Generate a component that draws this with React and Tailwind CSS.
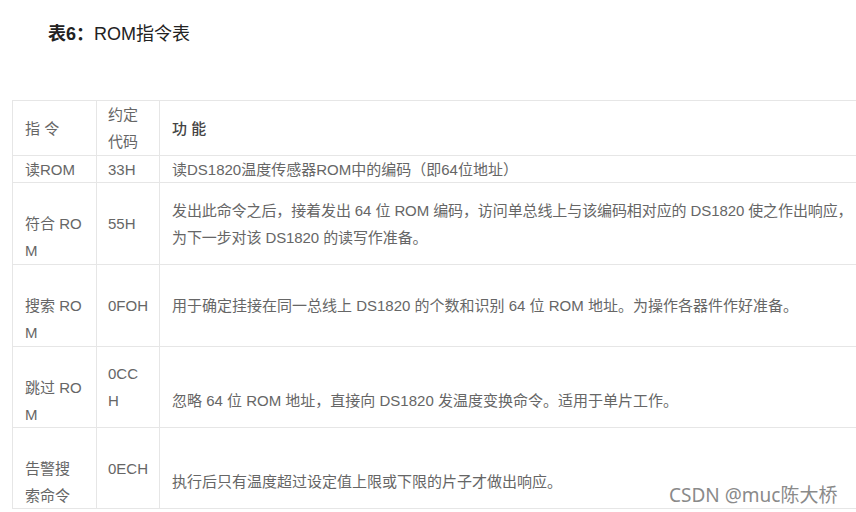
import React from 'react';

const font = { fontFamily: '"Liberation Sans", "Noto Sans CJK SC", sans-serif' };

// each row: height, and three cells; shifted cells sit half a line lower
const rows = [
  {
    h: 'h-[27px]',
    cells: [
      { lines: ['读ROM'] },
      { lines: ['33H'] },
      { lines: ['读DS1820温度传感器ROM中的编码（即64位地址）'] },
    ],
  },
  {
    h: 'h-[82px]',
    cells: [
      { lines: ['符合 RO', 'M'], shift: true },
      { lines: ['55H'] },
      {
        lines: [
          '发出此命令之后，接着发出 64 位 ROM 编码，访问单总线上与该编码相对应的 DS1820 使之作出响应，',
          '为下一步对该 DS1820 的读写作准备。',
        ],
        tight: true,
      },
    ],
  },
  {
    h: 'h-[82px]',
    cells: [
      { lines: ['搜索 RO', 'M'], shift: true },
      { lines: ['0FOH'] },
      { lines: ['用于确定挂接在同一总线上 DS1820 的个数和识别 64 位 ROM 地址。为操作各器件作好准备。'] },
    ],
  },
  {
    h: 'h-[81px]',
    cells: [
      { lines: ['跳过 RO', 'M'], shift: true },
      { lines: ['0CC', 'H'] },
      { lines: ['忽略 64 位 ROM 地址，直接向 DS1820 发温度变换命令。适用于单片工作。'], shift: true },
    ],
  },
  {
    h: 'h-[81px]',
    cells: [
      { lines: ['告警搜', '索命令'], shift: true },
      { lines: ['0ECH'] },
      { lines: ['执行后只有温度超过设定值上限或下限的片子才做出响应。'], shift: true },
    ],
  },
];

const colClass = [
  'w-[84px] shrink-0 border-r border-[#e6e6e6] pl-[12px]',
  'w-[63px] shrink-0 border-r border-[#e6e6e6] pl-[11px]',
  'flex-1 min-w-0 pl-[12px]',
];

function Cell({ cell, col }) {
  return (
    <div
      className={`${colClass[col]} flex flex-col justify-center whitespace-nowrap ${cell.shift ? 'pt-[27px]' : ''} ${cell.tight ? 'tracking-[-0.1px]' : ''}`}
    >
      {cell.lines.map((line, i) => (
        <div key={i} className="leading-[27px]">
          {line}
        </div>
      ))}
    </div>
  );
}

export default function App() {
  return (
    <div className="relative w-[856px] h-[512px] overflow-hidden bg-white" style={font}>
      {/* Title */}
      <div className="pl-[48px] pt-[22px] text-[18px] leading-[24px] text-[#222]">
        <span className="font-bold">表6：</span>ROM指令表
      </div>

      {/* Table */}
      <div className="ml-[12px] mt-[54px] w-[844px] border-t border-l border-[#e6e6e6] text-[15px] text-[#666]">
        <div className="flex h-[55px] border-b border-[#e6e6e6]">
          <Cell cell={{ lines: ['指 令'] }} col={0} />
          <Cell cell={{ lines: ['约定', '代码'] }} col={1} />
          <div className={`${colClass[2]} flex flex-col justify-center`}>
            <div className="leading-[27px] font-medium text-[#444]">功 能</div>
          </div>
        </div>
        {rows.map((row, r) => (
          <div key={r} className={`flex ${row.h} border-b border-[#e6e6e6]`}>
            {row.cells.map((cell, c) => (
              <Cell key={c} cell={cell} col={c} />
            ))}
          </div>
        ))}
      </div>

      {/* Watermark */}
      <div
        className="absolute left-[669px] top-[481px] text-[19px] leading-[28px] text-[#8a8a8a]"
        style={{ fontFamily: '"Noto Sans", "Noto Sans CJK SC", sans-serif' }}
      >
        CSDN @muc陈大桥
      </div>
    </div>
  );
}
